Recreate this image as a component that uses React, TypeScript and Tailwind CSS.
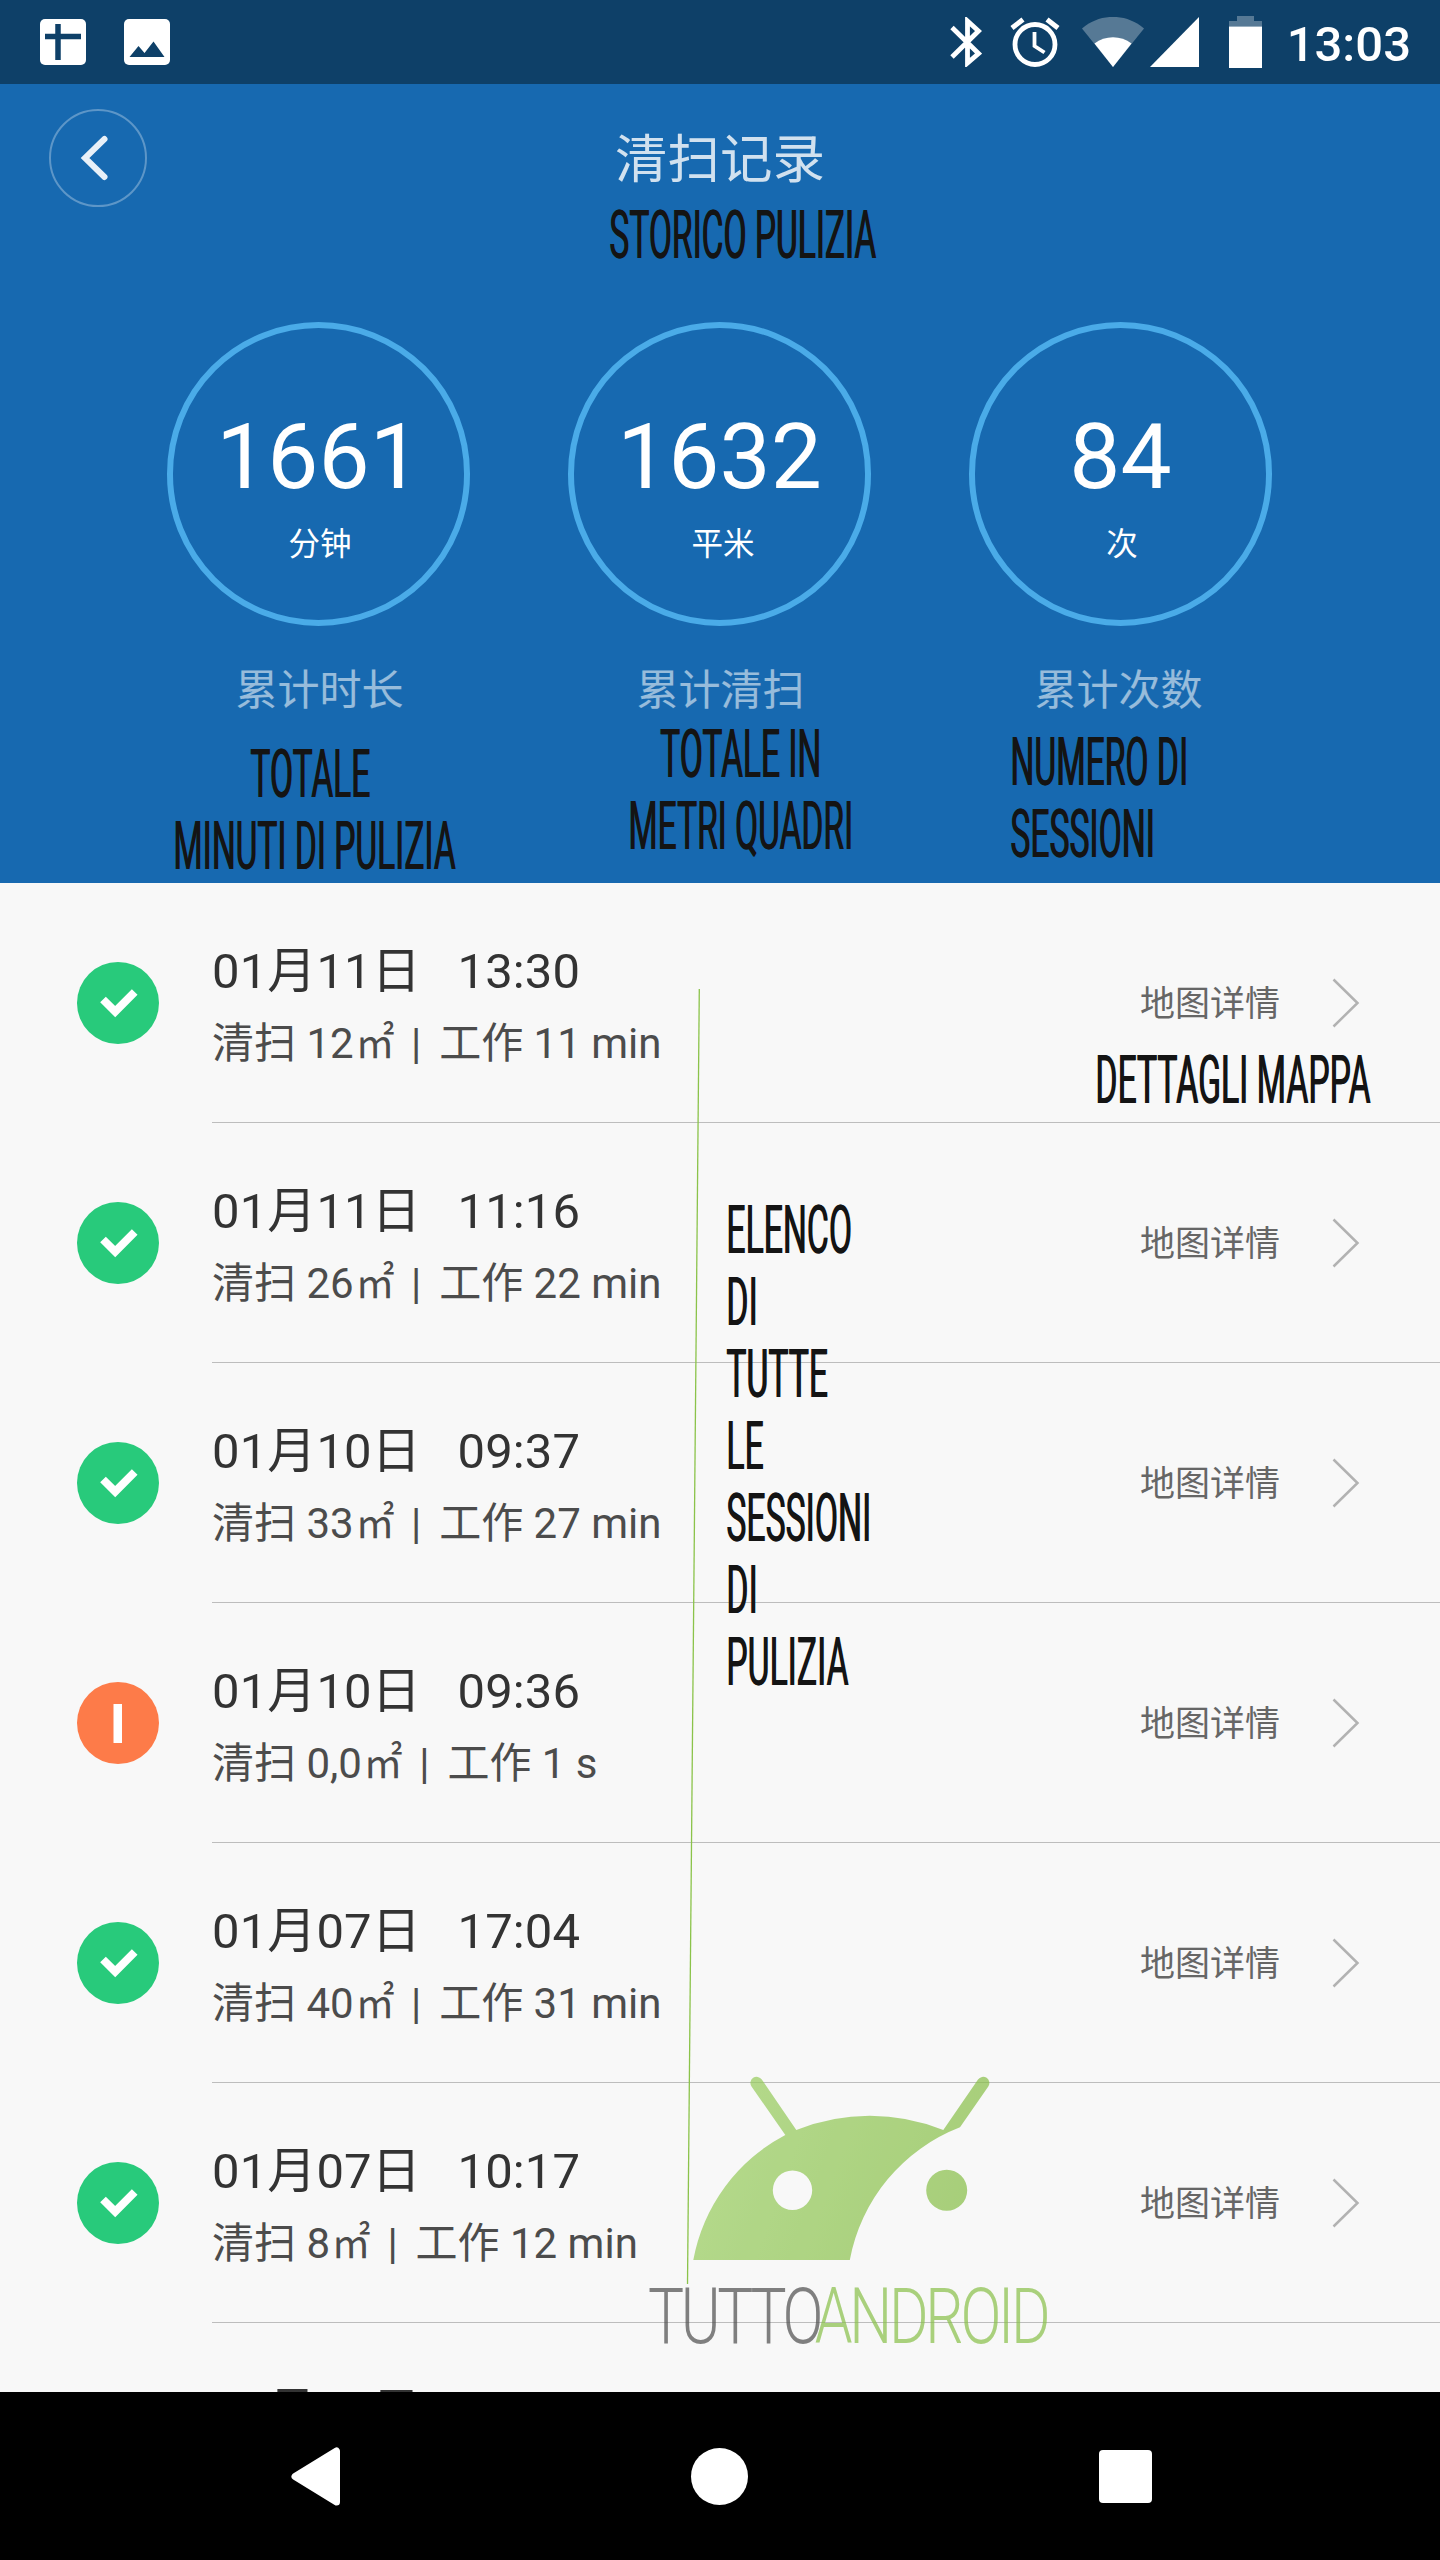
import React from "react";

type Session = {
  date: string;
  time: string;
  area: string;
  work: string;
  ok: boolean;
};

const sessions: Session[] = [
  { date: "01月11日", time: "13:30", area: "12", work: "11 min", ok: true },
  { date: "01月11日", time: "11:16", area: "26", work: "22 min", ok: true },
  { date: "01月10日", time: "09:37", area: "33", work: "27 min", ok: true },
  { date: "01月10日", time: "09:36", area: "0,0", work: "1 s", ok: false },
  { date: "01月07日", time: "17:04", area: "40", work: "31 min", ok: true },
  { date: "01月07日", time: "10:17", area: "8", work: "12 min", ok: true },
];

const stats = [
  { value: "1661", unit: "分钟", label: "累计时长", unitPad: "pl-[3px]", labelPad: "pl-[2px]" },
  { value: "1632", unit: "平米", label: "累计清扫", unitPad: "pl-[7px]", labelPad: "pl-[2px]" },
  { value: "84", unit: "次", label: "累计次数", unitPad: "pl-[3px]", labelPad: "pr-[4px]" },
];

function Note({ lines, className }: { lines: string[]; className: string }) {
  return (
    <div
      className={`absolute flex origin-left flex-col text-[66.5px] leading-[72px] whitespace-pre text-[#141414] [text-shadow:1.6px_0_0_#141414] ${className}`}
    >
      {lines.map((line, i) => (
        <span key={i}>{line}</span>
      ))}
    </div>
  );
}

function StatusBar() {
  return (
    <div className="flex h-[84px] shrink-0 items-center bg-[#0e4068] text-white">
      <svg className="ml-[40px] h-[46px] w-[46px]" viewBox="0 0 46 46">
        <rect width="46" height="46" rx="5" fill="#fff" />
        <path d="M18 5v36M5 17.500h36" stroke="#0e4068" strokeWidth="5.500" />
      </svg>
      <svg className="ml-[38px] h-[46px] w-[46px]" viewBox="0 0 46 46">
        <rect width="46" height="46" rx="5" fill="#fff" />
        <path d="M5.500 38l9-11 6 7 9-11.500 11 15.500z" fill="#0e4068" />
      </svg>
      <svg className="ml-auto h-[50px] w-[32px]" viewBox="0 0 32 50">
        <path d="M2 10.500L28.500 36.500L17.500 46V4L28.500 14L2 40" fill="none" stroke="#fff" strokeWidth="4.800" />
      </svg>
      <svg className="ml-[28px] h-[50px] w-[50px]" viewBox="0 0 50 50">
        <circle cx="25" cy="27.500" r="20" fill="none" stroke="#fff" strokeWidth="4.800" />
        <path d="M24.500 15v14l10 6.500" fill="none" stroke="#fff" strokeWidth="3.800" />
        <path d="M2 11L13 2.500M37 2.500L48 11" stroke="#fff" strokeWidth="5" />
      </svg>
      <svg className="ml-[22px] h-[50px] w-[62px]" viewBox="0 0 62 50">
        <path d="M0 11.500C18-4 44-4 62 11.500L31 50z" fill="#fff" fillOpacity=".3" />
        <path d="M12.500 26.500C23 18 39 18 49.500 26.500L31 50z" fill="#fff" />
      </svg>
      <svg className="ml-[6px] h-[50px] w-[49px]" viewBox="0 0 49 50">
        <path d="M49 0v50H0z" fill="#fff" />
      </svg>
      <svg className="ml-[30px] h-[52px] w-[33px]" viewBox="0 0 33 52">
        <path d="M8 0h17v5h8v5.500H0V5h8z" fill="#fff" fillOpacity=".3" />
        <path d="M0 10.500h33V52H0z" fill="#fff" />
      </svg>
      <span className="mr-[29px] ml-[25px] pt-[5px] text-[49px] leading-[56px] font-medium">13:03</span>
    </div>
  );
}

function Header() {
  return (
    <header className="relative h-[799px] shrink-0 bg-[#1769b0] text-white">
      <div className="flex h-[148px] items-center">
        <div className="ml-[49px] flex h-[98px] w-[98px] items-center justify-center rounded-full border-2 border-white/30">
          <svg className="mr-[9px] h-[48px] w-[30px]" viewBox="0 0 30 48">
            <path d="M25.500 5L6 24l19.500 19" fill="none" stroke="#e8f0f8" strokeWidth="6" strokeLinecap="round" strokeLinejoin="miter" />
          </svg>
        </div>
        <h1 className="w-[1146px] pt-[3px] text-center text-[52.5px] leading-[60px] font-normal text-white/80">清扫记录</h1>
      </div>
      <Note lines={["STORICO PULIZIA"]} className="top-[115px] left-[608.500px] scale-x-[0.504]" />
      <div className="mt-[89.500px] ml-[167px] flex gap-[98px]">
        {stats.map((s) => (
          <div key={s.value} className="flex w-[303px] flex-col items-center">
            <div className="flex h-[304px] w-[303px] flex-col items-center rounded-full border-[6px] border-[#4aabe8]">
              <span className="mt-[76px] text-[91px] leading-[106px]">{s.value}</span>
              <span className={`mt-[13px] text-[31.5px] leading-[44px] ${s.unitPad}`}>{s.unit}</span>
            </div>
            <span className={`mt-[35px] text-[42px] leading-[60px] text-white/55 ${s.labelPad}`}>{s.label}</span>
          </div>
        ))}
      </div>
      <Note lines={["TOTALE ", "MINUTI DI PULIZIA"]} className="top-[654px] left-[173px] scale-x-[0.504] items-center" />
      <Note lines={["TOTALE IN", "METRI QUADRI"]} className="top-[634px] left-[628px] scale-x-[0.504] items-center" />
      <Note lines={["NUMERO DI", "SESSIONI"]} className="top-[642px] left-[1010px] scale-x-[0.506]" />
    </header>
  );
}

function Row({ s }: { s: Session }) {
  return (
    <div className="flex h-[240px] shrink-0">
      <svg className="mt-[79px] ml-[77px] h-[82px] w-[82px]" viewBox="0 0 82 82">
        <circle cx="41" cy="41" r="41" fill={s.ok ? "#28ca7b" : "#fd7b49"} />
        {s.ok ? (
          <path d="M26 37.500L38.200 49.500L57.700 30" fill="none" stroke="#fff" strokeWidth="8" />
        ) : (
          <rect x="36.500" y="22" width="8.500" height="39" fill="#fff" />
        )}
      </svg>
      <div className="ml-[53px] flex grow border-b border-[#bdbdbd]">
        <div className="flex flex-col whitespace-pre">
          <span className="mt-[61px] text-[49px] leading-[56px] tracking-[0.1px] text-[#333]">{s.date + "   " + s.time}</span>
          <span className="mt-[19px] text-[42px] leading-[50px] text-[#4c4c4c]">
            {"清扫 " + s.area}
            <span className="inline-block scale-x-[0.93]">㎡</span>
            <span className="-mr-[3px] ml-[5px]"> | </span>
            {" 工作 " + s.work}
          </span>
        </div>
        <span className="mt-[97px] mr-[52px] ml-auto text-[35px] leading-[50px] text-[#666]">地图详情</span>
        <svg className="mt-[94px] mr-[80px] h-[52px] w-[28px]" viewBox="0 0 28 52">
          <path d="M1.500 2.500L25.500 26L1.500 49.500" fill="none" stroke="#b2b2b2" strokeWidth="2.500" />
        </svg>
      </div>
    </div>
  );
}

function Watermark() {
  return (
    <div className="absolute top-[1190px] left-[640px] w-[420px] opacity-70">
      <svg className="ml-[50px] h-[190px] w-[310px]" viewBox="690 2073 310 190">
        <defs>
          <linearGradient id="leaf" x1="700" y1="2150" x2="980" y2="2250" gradientUnits="userSpaceOnUse">
            <stop offset="0" stopColor="#98cd5e" />
            <stop offset="1" stopColor="#84bc43" />
          </linearGradient>
        </defs>
        <path
          fill="url(#leaf)"
          fillRule="evenodd"
          d="M693.300 2260A177 177 0 0 1 785.300 2135L751.500 2086.500A6 6 0 0 1 761.800 2079.500L796.300 2130A196 196 0 0 1 943.300 2130L978 2079.500A6 6 0 0 1 988.300 2086.500L960 2127.300A177 177 0 0 0 849.800 2260ZM772.800 2190.300a19.700 19.700 0 1 0 39.400 0a19.700 19.700 0 1 0 -39.400 0ZM926.200 2190.300a20.500 20.500 0 1 0 41 0a20.500 20.500 0 1 0 -41 0Z"
        />
      </svg>
      <div className="mt-[9px] ml-[8px] origin-left scale-x-[0.78] text-[77.5px] leading-[90px] font-light tracking-[-4.2px] whitespace-pre text-[#4d4d4d]">
        TUTTO<span className="-ml-[7px] text-[#88c049]">ANDROID</span>
      </div>
    </div>
  );
}

function NavBar() {
  return (
    <nav className="flex h-[168px] shrink-0 items-center bg-black">
      <svg className="ml-[291px] h-[60px] w-[50px]" viewBox="0 0 50 60">
        <path d="M4 30.500L45.500 5V56z" fill="#fff" stroke="#fff" strokeWidth="7" strokeLinejoin="round" />
      </svg>
      <div className="ml-[350px] h-[57px] w-[57px] rounded-full bg-white" />
      <div className="ml-[351px] h-[53px] w-[53px] rounded-[4px] bg-white" />
    </nav>
  );
}

export default function App() {
  return (
    <div className="flex h-[2560px] w-[1440px] flex-col overflow-hidden bg-[#f8f8f8] font-['Roboto','Noto_Sans_CJK_SC',sans-serif]">
      <StatusBar />
      <Header />
      <main className="relative flex h-[1509px] shrink-0 flex-col overflow-hidden">
        {sessions.map((s, i) => (
          <Row key={i} s={s} />
        ))}
        <span className="mt-[61px] ml-[212px] text-[49px] leading-[56px] tracking-[0.1px] whitespace-pre text-[#333]">
          {"01月07日   09:30"}
        </span>
        <svg className="absolute top-[106px] left-[686px] h-[1295px] w-[15px]" viewBox="0 0 15 1295">
          <path d="M13.300 0L1.500 1295" stroke="#8bc34a" strokeWidth="1.300" />
        </svg>
        <Note lines={["DETTAGLI MAPPA"]} className="top-[161px] left-[1095px] scale-x-[0.507]" />
        <Note
          lines={["ELENCO", "DI", "TUTTE", "LE", "SESSIONI", "DI", "PULIZIA"]}
          className="top-[311px] left-[725.500px] scale-x-[0.507]"
        />
        <Watermark />
      </main>
      <NavBar />
    </div>
  );
}
